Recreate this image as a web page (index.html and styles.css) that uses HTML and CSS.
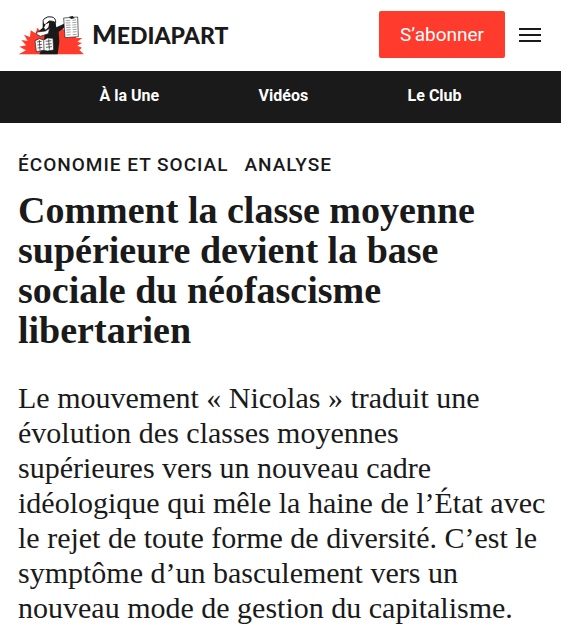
FILE: index.html
```html
<!DOCTYPE html>
<html lang="fr">
<head>
<meta charset="utf-8">
<meta name="viewport" content="width=device-width, initial-scale=1">
<title>Mediapart</title>
<link rel="stylesheet" href="styles.css">
</head>
<body>
<header class="header">
  <a class="brand" href="#">
    <svg class="brand-icon" viewBox="24 28 198 120" aria-hidden="true">
      <path fill="#ff3b2d" d="M26 146 48 134 28 123 48 119 34 103 53 106 42 87 60 94 62 74 77 83 82 66 94 80 158 70 205 86 197 97 217 97 202 108 216 112 202 120 216 126 208 133 222 146Z"/>
      <path fill="#1a1a1a" d="M98 52 116 45 136 48 139 65 162 54 165 65 146 78 148 108 143 146H88Q95 132 101 119L104 82 84 78 98 66Z"/>
      <path fill="#fff" stroke="#1a1a1a" stroke-width="3" d="M101 55Q96 42 105 38 112 31 126 34 138 37 137 51L128 47 118 46 105 57Z"/>
      <path fill="#fff" stroke="#1a1a1a" stroke-width="2" d="M81 79 106 76 119 68 115 84 91 92 80 86Z"/>
      <path fill="#fff" d="M107 56 118 51 115 65 107 72 102 66Z"/>
      <path fill="#1a1a1a" d="M118 49 136 51 137 61 121 60Z"/>
      <path fill="#fff" stroke="#1a1a1a" stroke-width="2" d="M161 37 203 34 205 93 165 96Z"/>
      <path fill="none" stroke="#777" stroke-width="2" d="M167 45 181 44M187 44 198 43M167 52 181 51M187 51 199 50M168 59 182 58M187 58 199 57M168 66 182 65M187 65 200 64M169 73 182 72M188 72 200 71M169 80 182 79M188 79 200 78M169 88 182 87M188 87 200 86"/>
      <path fill="#1a1a1a" d="M177 33 188 31 194 38 183 40Z"/>
      <path fill="#fff" stroke="#1a1a1a" stroke-width="2" d="M75 105 88 99 102 103 112 97 129 98 131 133 112 136 100 134 79 138Z"/>
      <path fill="none" stroke="#1a1a1a" stroke-width="2" d="M101 104 102 133M81 109 95 107M82 118 96 116M83 127 97 125M107 107 124 105M107 116 125 114M108 125 126 123M88 103 90 134M116 101 118 132"/>
    </svg>
    <span class="brand-name">M<span class="brand-caps">EDIAPART</span></span>
  </a>
  <div class="actions">
    <a class="subscribe" href="#">S’abonner</a>
    <button class="menu" type="button" aria-label="Menu">
      <svg class="menu-icon" viewBox="0 0 22 16" aria-hidden="true"><path d="M0 2H22M0 8H22M0 14H22"/></svg>
    </button>
  </div>
</header>
<nav class="nav">
  <a href="#">À la Une</a>
  <a href="#">Vidéos</a>
  <a href="#">Le Club</a>
</nav>
<main class="article">
  <p class="kicker"><a href="#">ÉCONOMIE ET SOCIAL</a><span>ANALYSE</span></p>
  <h1 class="title">Comment la classe moyenne <br>supérieure devient la base <br>sociale du néofascisme <br>libertarien</h1>
  <p class="lead">Le mouvement «&nbsp;Nicolas&nbsp;» traduit une <br>évolution des classes moyennes <br>supérieures vers un nouveau cadre <br>idéologique qui mêle la haine de l’État avec <br>le rejet de toute forme de diversité. C’est le <br>symptôme d’un basculement vers un <br>nouveau mode de gestion du capitalisme.</p>
</main>
</body>
</html>
```
FILE: styles.css
```css
* {
  box-sizing: border-box;
}

body {
  margin: 0;
  background: #fff;
  color: #1a1a1a;
  font-family: Roboto, "Liberation Sans", sans-serif;
}

a {
  color: inherit;
  text-decoration: none;
}

.header {
  display: flex;
  align-items: center;
  justify-content: space-between;
  padding: 11px 20px 13px 18px;
}

.brand {
  display: flex;
  align-items: center;
  gap: 8px;
}

.brand-icon {
  width: 66px;
  height: 40px;
}

.brand-name {
  font: 900 26px/38px Lato, sans-serif;
}

.brand-caps {
  font-size: 23px;
}

.actions {
  display: flex;
  align-items: center;
  gap: 14px;
}

.subscribe {
  padding: 0 21px;
  border-radius: 2px;
  background: #ff3b2d;
  color: #fff;
  font-size: 19px;
  line-height: 47px;
}

.menu {
  display: flex;
  padding: 0;
  border: 0;
  background: none;
}

.menu-icon {
  width: 22px;
  height: 16px;
  fill: none;
  stroke: #1a1a1a;
  stroke-width: 2;
}

.nav {
  display: flex;
  justify-content: space-evenly;
  padding: 0 0 2px;
  background: #1a1a1a;
  color: #fff;
  font-size: 16px;
  font-weight: 700;
  line-height: 50px;
}

.article {
  padding: 28px 8px 8px 18px;
}

.kicker {
  display: flex;
  gap: 16px;
  margin: 0;
  font-size: 19px;
  font-weight: 500;
  line-height: 28px;
  letter-spacing: 1px;
}

.title {
  margin: 11px 0 30px;
  font: 700 38px/40px "Liberation Serif", serif;
}

.lead {
  margin: 0;
  font: 400 30px/35px "Liberation Serif", serif;
}
```
